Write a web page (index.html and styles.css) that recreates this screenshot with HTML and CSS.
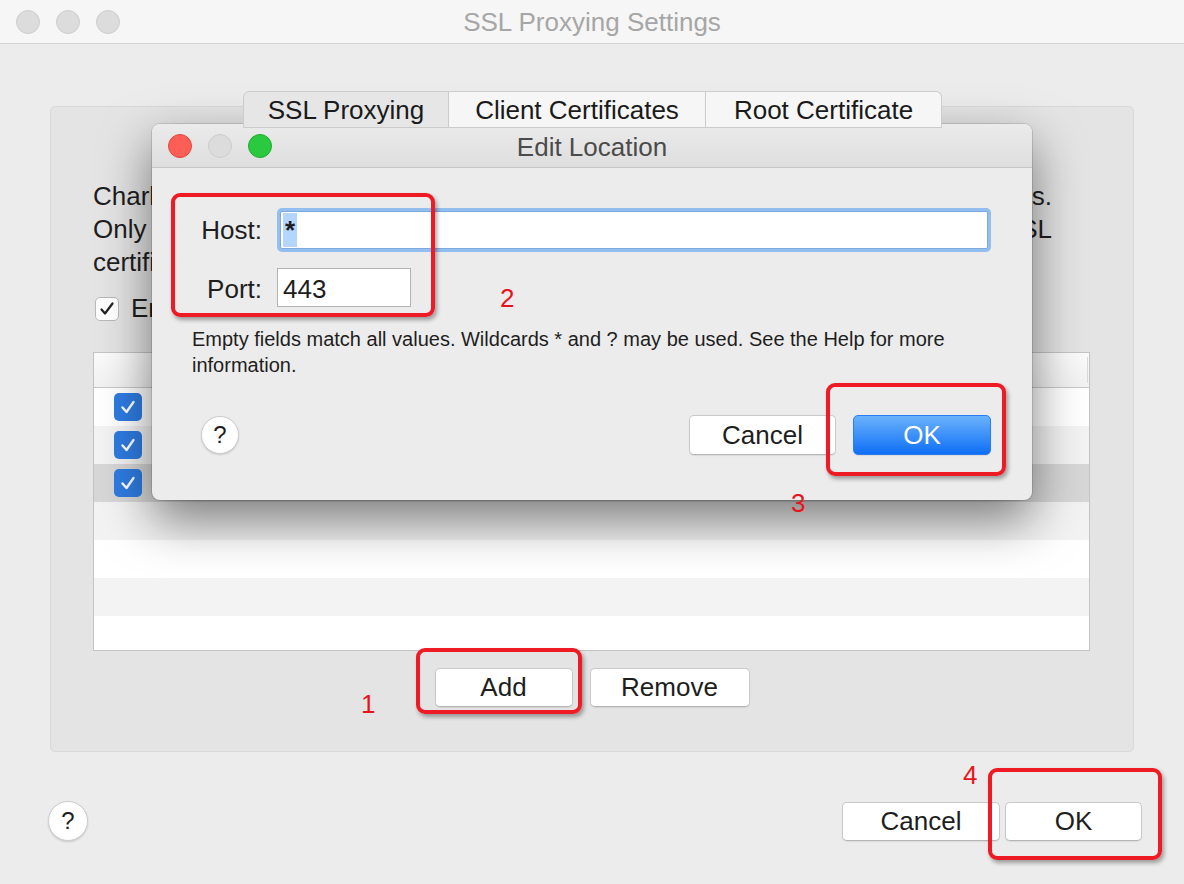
FILE: index.html
```html
<!DOCTYPE html>
<html>
<head>
<meta charset="utf-8">
<title>SSL Proxying Settings</title>
<link rel="stylesheet" href="styles.css">
</head>
<body>

<div class="window">
    <div class="titlebar">
        <div class="lights">
            <span class="light"></span>
            <span class="light"></span>
            <span class="light"></span>
        </div>
        <div class="title">SSL Proxying Settings</div>
        <div></div>
    </div>

    <div class="tabs">
        <div class="tab active">SSL Proxying</div>
        <div class="tab">Client Certificates</div>
        <div class="tab">Root Certificate</div>
    </div>

    <div class="group">
        <div class="intro">
            <div class="line just">Charles can show you the plain text contents of SSL requests and responses.</div>
            <div class="line just">Only the locations listed below will be proxied. Charles will issue and sign SSL</div>
            <div class="line">certificates, please press the Help button for more information.</div>
        </div>
        <div class="check-row">
            <span class="check">
                <svg width="16" height="16" viewBox="0 0 16 16"><path d="M2.5 8.5 L6 12.5 L13.5 2.5" fill="none" stroke="#222" stroke-width="2.2" stroke-linecap="round" stroke-linejoin="round"/></svg>
            </span>
            Enable SSL Proxying
        </div>

        <div class="table">
            <div class="thead"><span class="th">Location</span><span class="th-sep"></span></div>
            <div class="row"><span class="cb"><svg width="18" height="18" viewBox="0 0 18 18"><path d="M3.5 9.5 L7.5 14 L14.5 4" fill="none" stroke="#fff" stroke-width="2.4" stroke-linecap="round" stroke-linejoin="round"/></svg></span></div>
            <div class="row alt"><span class="cb"><svg width="18" height="18" viewBox="0 0 18 18"><path d="M3.5 9.5 L7.5 14 L14.5 4" fill="none" stroke="#fff" stroke-width="2.4" stroke-linecap="round" stroke-linejoin="round"/></svg></span></div>
            <div class="row selected"><span class="cb"><svg width="18" height="18" viewBox="0 0 18 18"><path d="M3.5 9.5 L7.5 14 L14.5 4" fill="none" stroke="#fff" stroke-width="2.4" stroke-linecap="round" stroke-linejoin="round"/></svg></span></div>
            <div class="row alt"></div>
            <div class="row"></div>
            <div class="row alt"></div>
            <div class="row"></div>
        </div>

        <div class="table-buttons">
            <button class="btn add">Add</button>
            <button class="btn remove">Remove</button>
        </div>
    </div>

    <div class="footer">
        <button class="help">?</button>
        <div class="footer-buttons">
            <button class="btn cancel">Cancel</button>
            <button class="btn ok">OK</button>
        </div>
    </div>
</div>

<div class="dialog">
    <div class="dialog-titlebar">
        <div class="lights">
            <span class="light red"></span>
            <span class="light"></span>
            <span class="light green"></span>
        </div>
        <div class="dialog-title">Edit Location</div>
        <div></div>
    </div>
    <div class="dialog-body">
        <div class="form">
            <label class="label">Host:</label>
            <div class="input host"><span class="sel">*</span></div>
            <label class="label">Port:</label>
            <div class="input port">443</div>
        </div>
        <p class="hint">Empty fields match all values. Wildcards * and ? may be used. See the Help for more<br>information.</p>
        <div class="dialog-footer">
            <button class="help small">?</button>
            <div class="footer-buttons">
                <button class="btn d-cancel">Cancel</button>
                <button class="btn primary">OK</button>
            </div>
        </div>
    </div>
</div>

<div class="mark box-1"></div>
<div class="mark box-2"></div>
<div class="mark box-3"></div>
<div class="mark box-4"></div>
<span class="num num-1">1</span>
<span class="num num-2">2</span>
<span class="num num-3">3</span>
<span class="num num-4">4</span>

</body>
</html>
```

FILE: styles.css
```css
body {
    margin: 0;
    width: 1184px;
    height: 884px;
    overflow: hidden;
    background: #ececec;
    font-family: "Liberation Sans", Arial, sans-serif;
    font-size: 26px;
    color: #1e1e1e;
    position: relative;
}
button {
    font-family: inherit;
    font-size: 26px;
    color: #1e1e1e;
    padding: 0;
}
.window {
    width: 1184px;
    height: 884px;
}
.titlebar {
    height: 43px;
    background: #f6f6f6;
    border-bottom: 1px solid #d2d2d2;
    display: grid;
    grid-template-columns: 1fr auto 1fr;
    align-items: center;
}
.lights {
    display: flex;
    gap: 16px;
    padding-left: 16px;
}
.light {
    width: 22px;
    height: 22px;
    border-radius: 50%;
    background: #dcdcdc;
    border: 1px solid #cdcdcd;
}
.light.red {
    background: #fd5f57;
    border-color: #e1463f;
}
.light.green {
    background: #2ac93f;
    border-color: #1eaa2e;
}
.title {
    color: #a6a6a6;
    padding-top: 2px;
}

/* tabs */
.tabs {
    display: flex;
    justify-content: center;
    margin-top: 47px;
    position: relative;
    z-index: 1;
    padding-left: 1px;
}
.tab {
    height: 35px;
    line-height: 37px;
    padding: 0 20px;
    background: #f6f6f6;
    border: 1px solid #cbcbcb;
    border-left: none;
    color: #1a1a1a;
}
.tab:first-child {
    border-left: 1px solid #cbcbcb;
    border-radius: 6px 0 0 0;
    width: 164px;
    text-align: center;
}
.tab:last-child {
    border-radius: 0 6px 0 0;
    width: 195px;
    text-align: center;
}
.tab:nth-child(2) {
    width: 216px;
    text-align: center;
}
.tab.active {
    background: #e6e6e6;
}

/* group box */
.group {
    margin: -22px 50px 0;
    height: 571px;
    background: #e4e4e4;
    border: 1px solid #d9d9d9;
    border-radius: 5px;
    padding: 73px 43px 0 42px;
}
.intro .line {
    line-height: 33px;
    white-space: nowrap;
    width: 959px;
}
.intro .just {
    text-align: justify;
    text-align-last: justify;
}
.check-row {
    margin-top: 13px;
    height: 33px;
    display: flex;
    align-items: center;
    gap: 12px;
}
.check {
    width: 22px;
    height: 22px;
    margin-left: 2px;
    background: #fff;
    border: 1px solid #b9b9b9;
    border-radius: 5px;
    display: flex;
    align-items: center;
    justify-content: center;
}

/* table */
.table {
    margin-top: 27px;
    height: 297px;
    background: #fff;
    border: 1px solid #c4c4c4;
    overflow: hidden;
}
.thead {
    height: 34px;
    border-bottom: 1px solid #c8c8c8;
    background: linear-gradient(#fbfbfb, #f1f1f1);
    display: flex;
    justify-content: space-between;
    align-items: center;
}
.th {
    padding-left: 60px;
    font-size: 22px;
    color: #555;
}
.th-sep {
    width: 1px;
    height: 26px;
    background: #dadada;
    margin-right: 1px;
}
.row {
    height: 38px;
    display: flex;
    align-items: center;
    padding-left: 20px;
}
.row.alt {
    background: #f3f3f3;
}
.row.selected {
    background: #d7d7d7;
}
.cb {
    width: 28px;
    height: 28px;
    border-radius: 5px;
    background: #2e7ce2;
    display: flex;
    align-items: center;
    justify-content: center;
}
.table-buttons {
    display: flex;
    justify-content: center;
    gap: 17px;
    margin-top: 17px;
    padding-left: 1px;
}

/* buttons */
.btn {
    height: 39px;
    background: #fff;
    border: 1px solid #c9c9c9;
    border-bottom-color: #b5b5b5;
    border-radius: 5px;
    box-shadow: 0 1px 1px rgba(0, 0, 0, 0.08);
}
.add { width: 138px; }
.remove { width: 160px; }
.cancel { width: 158px; }
.ok { width: 137px; }

.footer {
    display: flex;
    justify-content: space-between;
    align-items: center;
    margin-top: 49px;
    padding: 0 42px 0 48px;
}
.footer-buttons {
    display: flex;
    gap: 5px;
}
.help {
    width: 40px;
    height: 40px;
    border-radius: 50%;
    background: #fff;
    border: 1px solid #cdcdcd;
    box-shadow: 0 1px 2px rgba(0, 0, 0, 0.15);
    font-size: 24px;
}
.help.small {
    width: 38px;
    height: 38px;
}

/* dialog */
.dialog {
    position: absolute;
    left: 152px;
    top: 124px;
    width: 880px;
    height: 376px;
    background: #ececec;
    border-radius: 8px;
    overflow: hidden;
    box-shadow: 0 20px 50px rgba(0, 0, 0, 0.5), 0 0 0 1px rgba(0, 0, 0, 0.12);
}
.dialog-titlebar {
    height: 43px;
    background: linear-gradient(#ebebeb, #dedede);
    border-bottom: 1px solid #c6c6c6;
    display: grid;
    grid-template-columns: 1fr auto 1fr;
    align-items: center;
}
.dialog-title {
    color: #4b4b4b;
    padding-top: 3px;
}
.dialog-body {
    padding: 43px 44px 0 28px;
}
.form {
    display: grid;
    grid-template-columns: 82px 1fr;
    column-gap: 15px;
    row-gap: 19px;
    align-items: center;
}
.label {
    text-align: right;
}
.label:nth-of-type(2) {
    padding-top: 3px;
}
.input {
    background: #fff;
    box-sizing: border-box;
    padding-left: 5px;
    display: flex;
    align-items: center;
}
.host {
    height: 38px;
    margin-left: 3px;
    border: 1px solid #7ea9de;
    box-shadow: 0 0 0 3px #93bff0;
    border-radius: 2px;
    font-weight: bold;
    padding-left: 2px;
}
.sel {
    background: #b4d6fe;
    padding: 0 2px;
    line-height: 34px;
}
.port {
    width: 134px;
    height: 39px;
    border: 1px solid #b4b4b4;
    padding-top: 3px;
}
.hint {
    margin: 19px 0 0 12px;
    font-size: 20px;
    line-height: 26px;
    white-space: nowrap;
}
.dialog-footer {
    margin: 37px -3px 0 0;
    display: flex;
    justify-content: space-between;
    align-items: center;
    padding-left: 21px;
}
.dialog-footer .footer-buttons {
    gap: 17px;
}
.d-cancel {
    width: 147px;
    height: 40px;
}
.primary {
    width: 138px;
    height: 40px;
    border: 1px solid #2a7cf0;
    background: linear-gradient(#6ab2fb, #0f6ff6);
    color: #fff;
}

/* annotations */
.mark {
    position: absolute;
    border: 4px solid #ee1a24;
    border-radius: 9px;
    box-shadow: 2px 3px 4px rgba(0, 0, 0, 0.35);
}
.box-1 { left: 416px; top: 648px; width: 158px; height: 58px; }
.box-2 { left: 171px; top: 193px; width: 256px; height: 116px; }
.box-3 { left: 826px; top: 383px; width: 172px; height: 85px; }
.box-4 { left: 988px; top: 768px; width: 166px; height: 84px; }
.num {
    position: absolute;
    color: #e8141c;
    font-size: 26px;
    line-height: 30px;
}
.num-1 { left: 361px; top: 689px; }
.num-2 { left: 500px; top: 283px; }
.num-3 { left: 791px; top: 488px; }
.num-4 { left: 963px; top: 760px; }
```
